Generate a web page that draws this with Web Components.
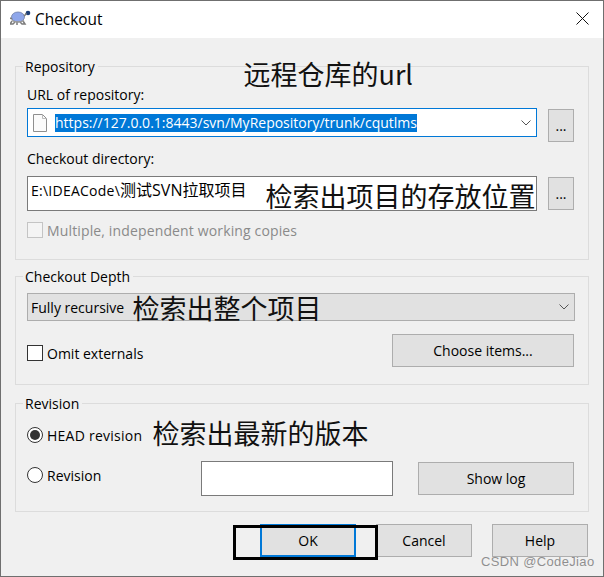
<!DOCTYPE html>
<html>
<head>
<meta charset="utf-8">
<title>Checkout</title>
<style>
  html, body { margin: 0; padding: 0; background: #fff; }
  body { font-family: "Open Sans", "Noto Sans CJK SC", sans-serif; font-size: 14px; color: #000; }
</style>
</head>
<body>
<checkout-dialog></checkout-dialog>
<script>
const chevron = `<svg width="10" height="6" viewBox="0 0 10 6"><path d="M.5.5l4.5 4.5 4.5-4.5" fill="none" stroke="#555" stroke-width="1"/></svg>`;

class TitleBar extends HTMLElement {
  constructor() {
    super();
    this.attachShadow({ mode: 'open' });
  }

  connectedCallback() {
    this.shadowRoot.innerHTML = `
      <style>
        :host { display: flex; align-items: center; box-sizing: border-box; height: 37px; background: #fff; padding: 0 14px 2px 9px; }
        svg { flex: none; }
        span { margin-left: 4px; padding-top: 2px; font-size: 15.4px; flex: 1; }
      </style>
      <svg width="21" height="19" viewBox="0 0 21 19">
        <ellipse cx="8" cy="8" rx="6.5" ry="5" fill="#8ea6ea" stroke="#6f7fa8" stroke-width=".8"/>
        <circle cx="18" cy="4" r="2.3" fill="#1d3f78"/>
        <path d="M14 7c2-1 2-2 2-3M2 12l-2 3h3l2-2M13 12l2 3h-3l-2-2M0 9l2 1M7 13v3" fill="none" stroke="#7b7b7b" stroke-width="1.5"/>
        <path d="M2 11.5c3 2 9 2 12 0" fill="none" stroke="#9a9a9a" stroke-width="1.4"/>
      </svg>
      <span><slot></slot></span>
      <svg width="13" height="13" viewBox="0 0 13 13"><path d="M.5.5l12 12M12.5.5l-12 12" stroke="#111" stroke-width="1"/></svg>
    `;
  }
}

class GroupBox extends HTMLElement {
  constructor() {
    super();
    this.attachShadow({ mode: 'open' });
  }

  connectedCallback() {
    this.shadowRoot.innerHTML = `
      <style>
        :host { display: block; }
        fieldset { margin: 0; min-width: 0; border: 1px solid #dcdcdc; padding: 0 14px 0 11px; height: var(--box-height); box-sizing: border-box; }
        legend { padding: 0 3px 0 2px; margin-left: -4px; line-height: 22px; height: 20px; }
      </style>
      <fieldset>
        <legend>${this.getAttribute('label')}</legend>
        <slot></slot>
      </fieldset>
    `;
  }
}

class WinButton extends HTMLElement {
  constructor() {
    super();
    this.attachShadow({ mode: 'open' });
  }

  connectedCallback() {
    this.shadowRoot.innerHTML = `
      <style>
        :host {
          display: flex; align-items: center; justify-content: center; box-sizing: border-box;
          height: 33px; background: #e1e1e1; border: 1px solid #adadad; flex: none;
        }
        :host([focused]) { border: 2px solid #0078d7; }
      </style>
      <slot></slot>
    `;
  }
}

class WinField extends HTMLElement {
  constructor() {
    super();
    this.attachShadow({ mode: 'open' });
  }

  connectedCallback() {
    this.shadowRoot.innerHTML = `
      <style>
        :host {
          display: flex; align-items: center; box-sizing: border-box; background: #fff;
          border: 1px solid #7a7a7a; flex: none; padding-left: 3px; overflow: hidden;
        }
        :host([active]) { border: 1px solid #0078d7; padding-left: 5px; }
        :host([flat]) { background: #e1e1e1; border-color: #adadad; }
        .text { flex: 1; white-space: nowrap; }
        ::slotted(svg) { flex: none; }
        .arrow { flex: none; width: 10px; margin-right: 5px; display: flex; }
      </style>
      <slot name="icon"></slot>
      <div class="text"><slot></slot></div>
      ${this.hasAttribute('arrow') ? `<div class="arrow">${chevron}</div>` : ''}
    `;
  }
}

class WinCheck extends HTMLElement {
  constructor() {
    super();
    this.attachShadow({ mode: 'open' });
  }

  connectedCallback() {
    const radio = this.getAttribute('type') === 'radio';
    const on = this.hasAttribute('checked');
    this.shadowRoot.innerHTML = `
      <style>
        :host { display: flex; align-items: center; gap: 4px; height: 16px; }
        :host([disabled]) { color: #8a8a8a; }
        .box {
          width: 16px; height: 16px; box-sizing: border-box; background: #fff; flex: none;
          border: 1px solid #333; border-radius: ${radio ? '50%' : '0'};
          display: flex; align-items: center; justify-content: center;
        }
        :host([disabled]) .box { border-color: #c4c4c4; background: #f4f4f4; }
        .dot { width: 10px; height: 10px; border-radius: 50%; background: #333; }
        .txt { line-height: 18px; height: 16px; }
      </style>
      <div class="box">${on ? '<div class="dot"></div>' : ''}</div>
      <div class="txt"><slot></slot></div>
    `;
  }
}

class CheckoutDialog extends HTMLElement {
  constructor() {
    super();
    this.attachShadow({ mode: 'open' });
  }

  connectedCallback() {
    this.shadowRoot.innerHTML = `
      <style>
        :host {
          display: block; position: relative; width: 604px; height: 577px; box-sizing: border-box;
          border: 1px solid #6f6f6f; background: #f0f0f0;
          font-family: "Open Sans", "Noto Sans CJK SC", sans-serif; font-size: 14px;
        }
        .body { padding: 18px 14px 0 14px; display: flex; flex-direction: column; }
        .label { height: 20px; line-height: 22px; }
        .row { display: flex; justify-content: space-between; }
        .repo { --box-height: 204px; }
        .depth { --box-height: 119px; margin-top: 6px; }
        .rev { --box-height: 119px; margin-top: 8px; }
        .sel { background: #0078d7; color: #fff; display: inline-block; line-height: 18px; margin-left: 8px; }
        .cjk { font-size: 16px; }
        .actions { display: flex; justify-content: flex-end; gap: 20px; margin-top: 12px; padding-right: 1px; }
        .actions win-button { width: 96px; }
        .note { position: absolute; font-size: 27px; line-height: 36px; color: #111; white-space: nowrap; font-family: "Noto Sans CJK SC", sans-serif; }
        .mark { position: absolute; left: 232px; top: 524px; width: 145px; height: 35px; box-sizing: border-box; border: 3px solid #000; }
        .wm { position: absolute; left: 480px; top: 553px; font: 13px "Liberation Sans", sans-serif; letter-spacing: .35px; color: rgba(110,110,110,.75); white-space: nowrap; }
      </style>
      <title-bar>Checkout</title-bar>
      <div class="body">
        <group-box class="repo" label="Repository">
          <div style="height:8px"></div>
          <div class="label">URL of repository:</div>
          <div class="row" style="margin-top:4px;height:34px">
            <win-field active arrow style="width:510px;height:29px">
              <svg slot="icon" width="14" height="18" viewBox="0 0 14 18"><path d="M.5.5h9l4 4v13H.5z" fill="#fbfbfb" stroke="#8f8f8f"/><path d="M9.5.5v4h4" fill="none" stroke="#bbb"/></svg>
              <span class="sel">https://127.0.0.1:8443/svn/MyRepository/trunk/cqutlms</span>
            </win-field>
            <win-button style="width:26px;margin-top:1px">...</win-button>
          </div>
          <div class="label" style="margin-top:6px">Checkout directory:</div>
          <div class="row" style="margin-top:8px;align-items:center">
            <win-field style="width:510px;height:35px;align-items:flex-start;line-height:26px"><span style="letter-spacing:.25px">E:\\IDEACode\\</span><span class="cjk">测试SVN拉取项目</span></win-field>
            <win-button style="width:26px">...</win-button>
          </div>
          <win-check disabled style="margin-top:11px;letter-spacing:.14px">Multiple, independent working copies</win-check>
        </group-box>
        <group-box class="depth" label="Checkout Depth">
          <win-field flat arrow style="width:548px;height:28px;margin-top:7px">Fully recursive</win-field>
          <div class="row" style="margin-top:13px">
            <win-check style="margin-top:11px">Omit externals</win-check>
            <win-button style="width:182px">Choose items...</win-button>
          </div>
        </group-box>
        <group-box class="rev" label="Revision">
          <div style="height:14px"></div>
          <win-check type="radio" checked style="letter-spacing:.25px">HEAD revision</win-check>
          <div class="row" style="margin-top:18px">
            <win-check type="radio" style="margin-top:6px">Revision</win-check>
            <div style="display:flex;gap:25px">
              <win-field style="width:192px;height:35px"></win-field>
              <win-button style="width:156px;margin-top:1px">Show log</win-button>
            </div>
          </div>
        </group-box>
        <div class="actions">
          <win-button focused>OK</win-button>
          <win-button>Cancel</win-button>
          <win-button>Help</win-button>
        </div>
      </div>
      <div class="note" style="left:242.5px;top:55px">远程仓库的url</div>
      <div class="note" style="left:264.5px;top:177px">检索出项目的存放位置</div>
      <div class="note" style="left:131.5px;top:289px">检索出整个项目</div>
      <div class="note" style="left:151.5px;top:414px">检索出最新的版本</div>
      <div class="mark"></div>
      <div class="wm">CSDN @CodeJiao</div>
    `;
  }
}

customElements.define('title-bar', TitleBar);
customElements.define('group-box', GroupBox);
customElements.define('win-button', WinButton);
customElements.define('win-field', WinField);
customElements.define('win-check', WinCheck);
customElements.define('checkout-dialog', CheckoutDialog);
</script>
</body>
</html>
